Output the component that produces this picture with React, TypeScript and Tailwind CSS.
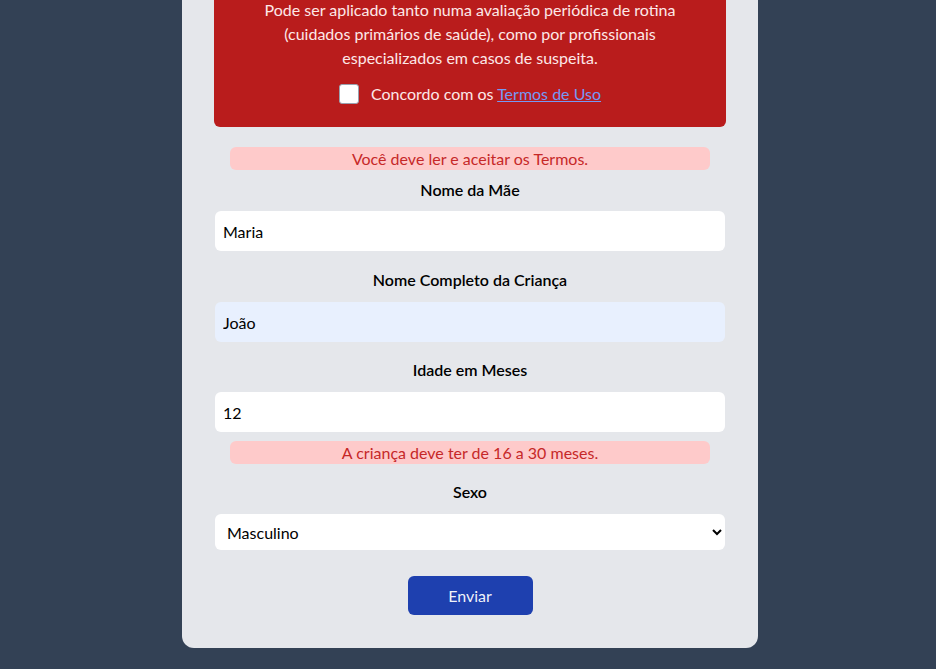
import React, { useState } from "react";

const font = { fontFamily: "Lato, 'Noto Sans', sans-serif" };

function Field({
  label,
  gap = "mb-[10px]",
  children,
}: {
  label: string;
  gap?: string;
  children: React.ReactNode;
}) {
  return (
    <div className="flex flex-col">
      <label
        className={`text-center text-base leading-6 font-semibold text-black ${gap}`}
      >
        {label}
      </label>
      {children}
    </div>
  );
}

function ErrorMsg({ text }: { text: string }) {
  return (
    <div className="mx-4 h-[23px] flex items-center justify-center rounded-md bg-[#fecaca] text-[#c62828] text-base">
      {text}
    </div>
  );
}

export default function App() {
  const [agree, setAgree] = useState(false);
  const [mae, setMae] = useState("Maria");
  const [crianca, setCrianca] = useState("João");
  const [idade, setIdade] = useState("12");
  const [sexo, setSexo] = useState("M");

  return (
    <div
      className="min-h-screen w-full bg-[#334155] flex justify-center pl-1 pb-[21px]"
      style={font}
    >
      <div className="w-[576px] bg-[#e5e7eb] rounded-b-xl px-8 pb-8">
        <div className="bg-[#b91c1c] rounded-b-md px-5 pb-[21px]">
          <p className="-mt-[2px] text-center text-base leading-6 text-[#fde8e8]">
            Pode ser aplicado tanto numa avaliação periódica de rotina
            <br />
            (cuidados primários de saúde), como por profissionais
            <br />
            especializados em casos de suspeita.
          </p>
          <div className="mt-3 flex items-center justify-center gap-3 h-6">
            <input
              type="checkbox"
              checked={agree}
              onChange={(e) => setAgree(e.target.checked)}
              className="appearance-none w-5 h-5 bg-white border border-gray-400 rounded-[3px]"
            />
            <span className="text-base text-[#fde8e8]">
              Concordo com os{" "}
              <a href="#" className="text-[#7699f3] underline">
                Termos de Uso
              </a>
            </span>
          </div>
        </div>

        <div className="mt-5">
          <ErrorMsg text="Você deve ler e aceitar os Termos." />
        </div>

        <div className="mt-2">
          <Field label="Nome da Mãe" gap="mb-[9px]">
            <input
              value={mae}
              onChange={(e) => setMae(e.target.value)}
              className="mx-px h-10 rounded-md bg-white px-2 text-base text-black outline-none"
            />
          </Field>
        </div>
        <div className="mt-[17px]">
          <Field label="Nome Completo da Criança">
            <input
              value={crianca}
              onChange={(e) => setCrianca(e.target.value)}
              className="mx-px h-10 rounded-md bg-[#e8f0fe] px-2 text-base text-black outline-none"
            />
          </Field>
        </div>
        <div className="mt-4">
          <Field label="Idade em Meses">
            <input
              value={idade}
              onChange={(e) => setIdade(e.target.value)}
              className="mx-px h-10 rounded-md bg-white px-2 text-base text-black outline-none"
            />
          </Field>
        </div>

        <div className="mt-[9px]">
          <ErrorMsg text="A criança deve ter de 16 a 30 meses." />
        </div>

        <div className="mt-4">
          <Field label="Sexo">
            <select
              value={sexo}
              onChange={(e) => setSexo(e.target.value)}
              className="mx-px h-9 rounded-md bg-white px-2 text-base text-black outline-none"
            >
              <option value="M">Masculino</option>
              <option value="F">Feminino</option>
            </select>
          </Field>
        </div>

        <div className="mt-[26px] flex justify-center">
          <button className="w-[125px] h-[39px] rounded-md bg-[#1e40af] text-base text-white/95">
            Enviar
          </button>
        </div>
      </div>
    </div>
  );
}
